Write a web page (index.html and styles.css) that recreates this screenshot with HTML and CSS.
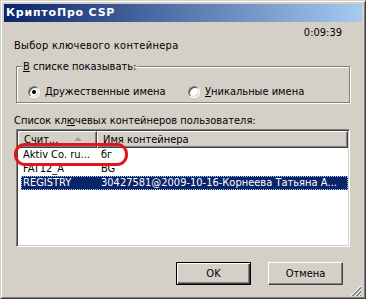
FILE: index.html
```html
<!DOCTYPE html>
<html>
    <head>
        <title>КриптоПро CSP</title>
        <meta charset="utf-8" />
        <link rel="stylesheet" href="styles.css">
    </head>
    <body>
        <div class="window">
            <div class="titlebar">КриптоПро CSP</div>
            <div class="client">
                <div class="timer">0:09:39</div>
                <div class="prompt">Выбор ключевого контейнера</div>

                <div class="group">
                    <span class="group-title"><u>В</u> списке показывать:</span>
                    <div class="radios">
                        <label class="radio first">
                            <span class="radio-box checked"></span>
                            <span><u>Д</u>ружественные имена</span>
                        </label>
                        <label class="radio">
                            <span class="radio-box"></span>
                            <span><u>У</u>никальные имена</span>
                        </label>
                    </div>
                </div>

                <div class="list-label">Список кл<u>ю</u>чевых контейнеров пользователя:</div>
                <div class="listview">
                    <div class="lv-header">
                        <div class="lv-col col-reader">Счит...<span class="sort-arrow"></span></div>
                        <div class="lv-col col-name">Имя контейнера</div>
                    </div>
                    <div class="lv-row">
                        <span class="col-reader">Aktiv Co. ru...</span>
                        <span class="col-name">бг</span>
                    </div>
                    <div class="lv-row">
                        <span class="col-reader">FAT12_A</span>
                        <span class="col-name">BG</span>
                    </div>
                    <div class="lv-row selected">
                        <span class="col-reader">REGISTRY</span>
                        <span class="col-name">30427581@2009-10-16-Корнеева Татьяна А...</span>
                    </div>
                    <!-- red marker drawn over the first row -->
                    <span class="marker"></span>
                </div>

                <div class="buttons">
                    <button type="button" class="btn default">OK</button>
                    <button type="button" class="btn">Отмена</button>
                </div>
            </div>
            <svg class="grip" width="12" height="12" viewBox="0 0 12 12">
                <path d="M11 1 L1 11 M11 5 L5 11 M11 9 L9 11" stroke="#fff" stroke-width="1" />
                <path d="M11 2 L2 11 M11 3 L3 11 M11 6 L6 11 M11 7 L7 11 M11 10 L10 11" stroke="#808080" stroke-width="1" />
            </svg>
        </div>
    </body>
</html>
```

FILE: styles.css
```css
html, body {
    margin: 0;
    padding: 0;
}

body {
    font-family: "DejaVu Sans Condensed", "DejaVu Sans", sans-serif;
    font-stretch: semi-condensed;
    font-size: 11px;
    color: #000;
    background: #D4D0C8;
}

.window {
    position: relative;
    width: 366px;
    height: 299px;
    box-sizing: border-box;
    padding: 3px;
    background: #D4D0C8;
    border: 1px solid;
    border-color: #D4D0C8 #404040 #404040 #D4D0C8;
    box-shadow: inset 1px 1px #fff, inset -1px -1px #808080;
}

.titlebar {
    height: 18px;
    line-height: 18px;
    padding-left: 2px;
    color: #fff;
    font-family: "DejaVu Sans", sans-serif;
    font-stretch: normal;
    font-weight: bold;
    letter-spacing: 0.8px;
    background: linear-gradient(to right, #0A246A, #A6CAF0);
}

.client {
    padding: 0 12px;
}

.timer {
    margin-top: 4px;
    padding-right: 8px;
    text-align: right;
    line-height: 13px;
}

.prompt {
    line-height: 13px;
    margin-left: -2px;
    letter-spacing: 0.3px;
}

.group {
    margin-top: 14px;
    height: 35px;
    border: 1px solid #808080;
    box-shadow: inset 1px 1px #fff, 1px 1px #fff;
}

.group-title {
    display: inline-block;
    margin: -7px 0 0 5px;
    padding: 0 1px;
    line-height: 13px;
    background: #D4D0C8;
    vertical-align: top;
}

.radios {
    display: flex;
    padding: 5px 0 0 11px;
}

.radio {
    display: flex;
    align-items: center;
    gap: 5px;
    line-height: 13px;
}

.radio.first {
    width: 160px;
}

.radio-box {
    width: 12px;
    height: 12px;
    box-sizing: border-box;
    border-radius: 50%;
    background: #fff;
    border: 1px solid;
    border-color: #808080 #fff #fff #808080;
    box-shadow: inset 1px 1px #404040, inset -1px -1px #D4D0C8;
    display: flex;
    align-items: center;
    justify-content: center;
}

.radio-box.checked::after {
    content: "";
    width: 4px;
    height: 4px;
    border-radius: 50%;
    background: #000;
}

.list-label {
    margin-top: 11px;
    margin-left: -2px;
    line-height: 13px;
}

.listview {
    position: relative;
    margin-top: 2px;
    height: 118px;
    box-sizing: border-box;
    background: #fff;
    border: 1px solid;
    border-color: #808080 #fff #fff #808080;
    box-shadow: inset 1px 1px #404040, inset -1px -1px #D4D0C8;
    padding: 1px;
}

.lv-header {
    display: flex;
    height: 17px;
}

.lv-col {
    box-sizing: border-box;
    height: 17px;
    line-height: 15px;
    padding: 0 5px;
    background: #D4D0C8;
    border: 1px solid;
    border-color: #fff #404040 #404040 #fff;
    box-shadow: inset -1px -1px #808080;
    white-space: nowrap;
    overflow: hidden;
}

.lv-col.col-reader {
    width: 79px;
    position: relative;
}

.lv-col.col-name {
    flex: 1;
}

.sort-arrow {
    position: absolute;
    right: 14px;
    top: 5px;
    border-left: 4px solid transparent;
    border-right: 4px solid transparent;
    border-bottom: 4px solid #A0A0A0;
}

.lv-row {
    display: flex;
    height: 14px;
    line-height: 14px;
    margin-left: 3px;
    white-space: nowrap;
}

.lv-row:first-of-type {
    margin-top: -1px;
}

.lv-row .col-reader {
    width: 74px;
    padding-left: 2px;
}

.lv-row .col-name {
    flex: 1;
    padding-left: 4px;
}

.lv-row.selected {
    background: #0A246A;
    color: #fff;
    outline: 1px dotted #A6CAF0;
    outline-offset: -1px;
}

.marker {
    position: absolute;
    left: -3px;
    top: 13px;
    width: 114px;
    height: 23px;
    box-sizing: border-box;
    border: 3px solid #E2141C;
    border-radius: 11px;
}

.buttons {
    display: flex;
    justify-content: flex-end;
    gap: 17px;
    margin-top: 15px;
    padding-right: 7px;
}

.btn {
    width: 75px;
    height: 23px;
    box-sizing: border-box;
    font: inherit;
    color: #000;
    background: #D4D0C8;
    border: 1px solid;
    border-color: #fff #404040 #404040 #fff;
    box-shadow: inset -1px -1px #808080;
    padding: 0;
}

.btn.default {
    border: 1px solid #000;
    box-shadow: inset 1px 1px #fff, inset -1px -1px #404040, inset -2px -2px #808080;
}

.grip {
    position: absolute;
    right: 3px;
    bottom: 1px;
}
```
